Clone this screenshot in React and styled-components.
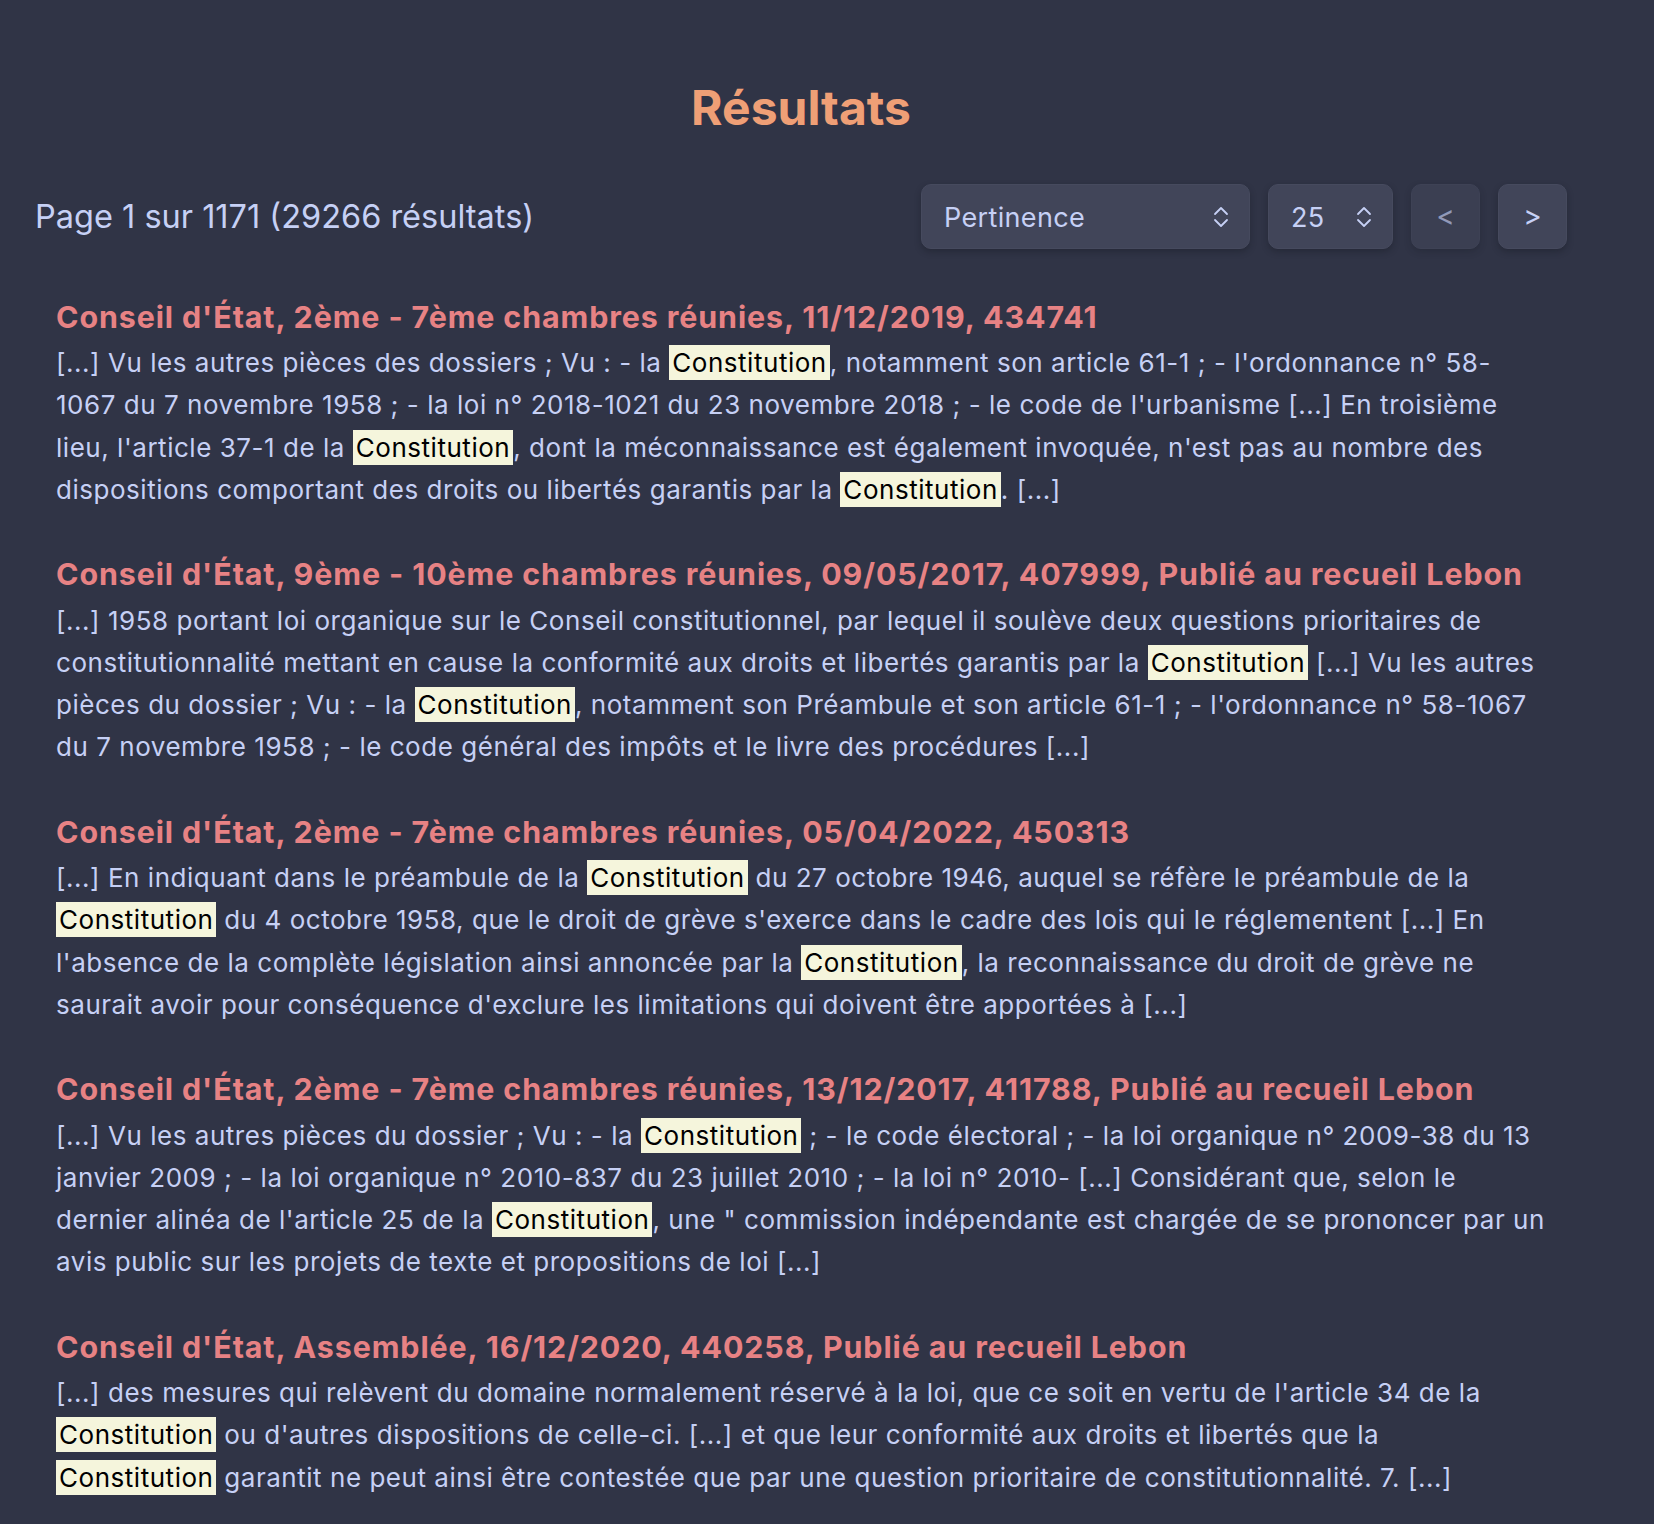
import React from 'react';
import styled, { createGlobalStyle } from 'styled-components';

const GlobalStyle = createGlobalStyle`
  html, body {
    margin: 0;
    padding: 0;
    background: #303446;
  }
  body {
    font-family: Inter, "Noto Sans", "Liberation Sans", sans-serif;
    color: #c6d0f5;
  }
`;

const Page = styled.main`
  box-sizing: border-box;
  min-height: 1524px;
  padding: 79px 87px 40px 35px;
  background: #303446;
`;

const Heading = styled.h1`
  margin: 0;
  text-align: center;
  font-size: 48px;
  line-height: 58.5px;
  font-weight: 700;
  color: #ef9f76;
`;

const Toolbar = styled.div`
  display: flex;
  align-items: center;
  justify-content: space-between;
  margin-top: 46px;
  height: 65px;
`;

const PageInfo = styled.p`
  margin: 0;
  padding-top: 2px;
  font-size: 32.5px;
  line-height: 45.5px;
  color: #c6d0f5;
`;

const Controls = styled.div`
  display: flex;
  align-items: center;
  gap: 18px;
`;

const SelectWrap = styled.div`
  position: relative;
  width: ${(p) => p.$width}px;
  height: 65px;
`;

const Select = styled.select`
  appearance: none;
  box-sizing: border-box;
  width: 100%;
  height: 100%;
  padding: 2px 48px 0 22px;
  font-family: inherit;
  font-size: 27px;
  letter-spacing: 0.35px;
  color: #c6d0f5;
  background: #414559;
  border: 1px solid #464a5e;
  border-radius: 10px;
  box-shadow: 0 3px 6px rgba(20, 22, 32, 0.35);
  outline: none;
`;

const Chevrons = styled.svg`
  position: absolute;
  right: 21px;
  top: 22px;
  width: 16px;
  height: 22px;
  pointer-events: none;
`;

const NavButton = styled.button`
  box-sizing: border-box;
  width: 69px;
  height: 65px;
  font-family: inherit;
  font-size: 28px;
  color: #c6d0f5;
  background: #414559;
  border: 1px solid #464a5e;
  border-radius: 10px;
  box-shadow: 0 3px 6px rgba(20, 22, 32, 0.35);
  opacity: ${(p) => (p.disabled ? 0.65 : 1)};
  cursor: pointer;
`;

const Results = styled.ol`
  list-style: none;
  margin: 46px 0 0;
  padding: 0 21px 0 21px;
  display: flex;
  flex-direction: column;
  gap: 41px;
`;

const Item = styled.li`
  margin: 0;
`;

const Title = styled.a`
  display: block;
  margin-bottom: 2px;
  font-size: 30.4px;
  line-height: 45.5px;
  font-weight: 700;
  letter-spacing: 0.9px;
  color: #e78284;
  text-decoration: none;
`;

const Excerpt = styled.p`
  margin: 0;
  font-size: 26px;
  line-height: 42.25px;
  letter-spacing: 0.53px;
  color: #c6d0f5;
`;

const Mark = styled.mark`
  background: #f5f5dc;
  color: #000;
  padding: 2px 3px;
`;

const results = [
  {
    title: "Conseil d'État, 2ème - 7ème chambres réunies, 11/12/2019, 434741",
    parts: [
      "[...] Vu les autres pièces des dossiers ; Vu : - la ",
      "Constitution",
      ", notamment son article 61-1 ; - l'ordonnance n° 58-1067 du 7 novembre 1958 ; - la loi n° 2018-1021 du 23 novembre 2018 ; - le code de l'urbanisme [...] En troisième lieu, l'article 37-1 de la ",
      "Constitution",
      ", dont la méconnaissance est également invoquée, n'est pas au nombre des dispositions comportant des droits ou libertés garantis par la ",
      "Constitution",
      ". [...]",
    ],
  },
  {
    title: "Conseil d'État, 9ème - 10ème chambres réunies, 09/05/2017, 407999, Publié au recueil Lebon",
    parts: [
      "[...] 1958 portant loi organique sur le Conseil constitutionnel, par lequel il soulève deux questions prioritaires de constitutionnalité mettant en cause la conformité aux droits et libertés garantis par la ",
      "Constitution",
      " [...] Vu les autres pièces du dossier ; Vu : - la ",
      "Constitution",
      ", notamment son Préambule et son article 61-1 ; - l'ordonnance n° 58-1067 du 7 novembre 1958 ; - le code général des impôts et le livre des procédures [...]",
    ],
  },
  {
    title: "Conseil d'État, 2ème - 7ème chambres réunies, 05/04/2022, 450313",
    parts: [
      "[...] En indiquant dans le préambule de la ",
      "Constitution",
      " du 27 octobre 1946, auquel se réfère le préambule de la ",
      "Constitution",
      " du 4 octobre 1958, que le droit de grève s'exerce dans le cadre des lois qui le réglementent [...] En l'absence de la complète législation ainsi annoncée par la ",
      "Constitution",
      ", la reconnaissance du droit de grève ne saurait avoir pour conséquence d'exclure les limitations qui doivent être apportées à [...]",
    ],
  },
  {
    title: "Conseil d'État, 2ème - 7ème chambres réunies, 13/12/2017, 411788, Publié au recueil Lebon",
    parts: [
      "[...] Vu les autres pièces du dossier ; Vu : - la ",
      "Constitution",
      " ; - le code électoral ; - la loi organique n° 2009-38 du 13 janvier 2009 ; - la loi organique n° 2010-837 du 23 juillet 2010 ; - la loi n° 2010- [...] Considérant que, selon le dernier alinéa de l'article 25 de la ",
      "Constitution",
      ", une \" commission indépendante est chargée de se prononcer par un avis public sur les projets de texte et propositions de loi [...]",
    ],
  },
  {
    title: "Conseil d'État, Assemblée, 16/12/2020, 440258, Publié au recueil Lebon",
    parts: [
      "[...] des mesures qui relèvent du domaine normalement réservé à la loi, que ce soit en vertu de l'article 34 de la ",
      "Constitution",
      " ou d'autres dispositions de celle-ci. [...] et que leur conformité aux droits et libertés que la ",
      "Constitution",
      " garantit ne peut ainsi être contestée que par une question prioritaire de constitutionnalité. 7. [...]",
    ],
  },
];

function UpDown() {
  return (
    <Chevrons viewBox="0 0 16 22" fill="none" stroke="#c6d0f5" strokeWidth="1.8" strokeLinecap="round" strokeLinejoin="round">
      <path d="M2 8 L8 2 L14 8" />
      <path d="M2 14 L8 20 L14 14" />
    </Chevrons>
  );
}

export default function App() {
  return (
    <>
      <GlobalStyle />
      <Page>
        <Heading>Résultats</Heading>
        <Toolbar>
          <PageInfo>Page 1 sur 1171 (29266 résultats)</PageInfo>
          <Controls>
            <SelectWrap $width={329}>
              <Select defaultValue="pertinence">
                <option value="pertinence">Pertinence</option>
                <option value="date">Date</option>
              </Select>
              <UpDown />
            </SelectWrap>
            <SelectWrap $width={125}>
              <Select defaultValue="25">
                <option value="10">10</option>
                <option value="25">25</option>
                <option value="50">50</option>
              </Select>
              <UpDown />
            </SelectWrap>
            <NavButton disabled>&lt;</NavButton>
            <NavButton>&gt;</NavButton>
          </Controls>
        </Toolbar>
        <Results>
          {results.map((r) => (
            <Item key={r.title}>
              <Title href="#">{r.title}</Title>
              <Excerpt>
                {r.parts.map((p, i) => (i % 2 === 1 ? <Mark key={i}>{p}</Mark> : p))}
              </Excerpt>
            </Item>
          ))}
        </Results>
      </Page>
    </>
  );
}
